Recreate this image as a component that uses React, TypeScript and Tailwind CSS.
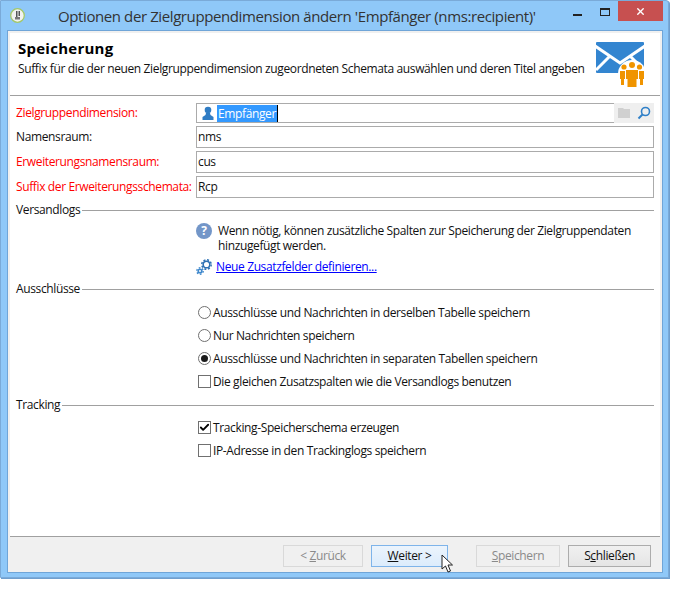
import React from 'react';
import { Check, X } from 'lucide-react';

const Field = ({ label, value, required }: { label: string; value: string; required?: boolean }) => (
  <div className="flex items-center h-[22px] mb-[3px]">
    <label className={`w-[180px] shrink-0 ${required ? 'text-[#ff0000]' : ''}`}>{label}</label>
    <div className="flex-1 h-[22px] border border-[#ababab] bg-white pl-[1px] leading-[19px]">{value}</div>
  </div>
);

const Section = ({ title }: { title: string }) => (
  <div className="flex items-center gap-[2px] h-[18px]">
    <span>{title}</span>
    <div className="flex-1 h-px bg-[#a0a0a0]" />
  </div>
);

const Radio = ({ label, checked }: { label: string; checked?: boolean }) => (
  <div className="flex items-center h-[23px] pl-[2px]">
    <span className="w-[13px] h-[13px] rounded-full border border-[#707070] bg-white flex items-center justify-center shrink-0 mr-[2px]">
      {checked && <span className="w-[7px] h-[7px] rounded-full bg-[#1a1a1a]" />}
    </span>
    <span>{label}</span>
  </div>
);

const CheckRow = ({ label, checked }: { label: string; checked?: boolean }) => (
  <div className="flex items-center h-[23px] pl-[2px]">
    <span className="w-[13px] h-[13px] border border-[#707070] bg-white flex items-center justify-center shrink-0 mr-[2px]">
      {checked && <Check className="w-[11px] h-[11px] text-black" strokeWidth={4} />}
    </span>
    <span>{label}</span>
  </div>
);

const FooterButton = ({ className, children }: { className: string; children: React.ReactNode }) => (
  <div className={`h-[22px] flex items-center justify-center border ${className}`}>{children}</div>
);

const MailIcon = () => (
  <svg width="48" height="45" viewBox="0 0 48 45" className="shrink-0">
    <rect x="0" y="0" width="48" height="31" rx="1" fill="#3385d0" />
    <path d="M-1 4l25 17L49 4M0 28l14-14M48 28L34 14" fill="none" stroke="#fff" strokeWidth="3" />
    <circle cx="36" cy="32" r="14" fill="#fff" />
    <rect x="22" y="31" width="26" height="14" fill="#fff" />
    <circle cx="28" cy="25" r="2.600" fill="#f09400" />
    <circle cx="36" cy="23" r="3" fill="#f09400" />
    <circle cx="43.500" cy="25" r="2.600" fill="#f09400" />
    <path d="M24 29h5v8h-1v6h-3v-6h-1zM43 29h5v8h-1v6h-3v-6h-1z" fill="#f09400" />
    <path d="M30 28h12v9h-1.500v8h-9v-8H30z" fill="#f09400" />
  </svg>
);

const App: React.FC = () => {
  return (
    <div className="w-[684px] h-[589px] bg-white relative overflow-hidden text-[12px] leading-[16px] text-[#111] font-['Open_Sans',sans-serif] tracking-[-0.37px]">
      <div className="w-[669px] h-[578px] bg-[#8fc8f8] border border-[#7aaad8] rounded-tr-[3px] flex flex-col shadow-[1px_1px_0_#6f9fcf]">
        {/* Title bar */}
        <div className="h-[29px] flex items-start shrink-0 relative">
          <div className="mt-[7px] ml-[9px] w-[15px] h-[15px] shrink-0">
            <svg width="15" height="15" viewBox="0 0 15 15">
              <circle cx="7.500" cy="7.500" r="6.800" fill="#f2f2f0" stroke="#a4c868" strokeWidth="1.300" />
              <path d="M6 3h1.500v6H6zM8.500 3H10v5H8.500z" fill="#555" />
              <path d="M5 9h5v2.500H5z" fill="#777" />
            </svg>
          </div>
          <div className="ml-[33px] mt-[5px] text-[15px] leading-[20px] tracking-[-0.4px] text-[#333] whitespace-nowrap">
            Optionen der Zielgruppendimension ändern 'Empfänger (nms:recipient)'
          </div>
          <div className="ml-auto flex items-start mr-[5px]">
            <div className="w-[9px] h-[2px] bg-[#222] mt-[13px] mr-[18px]" />
            <div className="w-[10px] h-[8px] border border-[#222] border-t-2 mt-[7px] mr-[8px]" />
            <div className="w-[45px] h-[20px] bg-[#c75050] flex items-center justify-center">
              <X className="w-[11px] h-[11px] text-white" strokeWidth={3} />
            </div>
          </div>
        </div>

        {/* Dialog body */}
        <div className="flex-1 ml-[6px] mr-[5px] mb-[4px] border border-[#6fa5d8] bg-[#f0f0f0] p-[2px] pb-0 flex flex-col">
          <div className="bg-white flex-1 flex flex-col">
            <div className="h-[63px] flex items-start justify-between pl-[8px] pr-[16px] border-b border-[#a0a0a0] shrink-0">
              <div>
                <h1 className="font-bold text-[15px] leading-[20px] mt-[5px] text-black tracking-[0.25px]">Speicherung</h1>
                <p className="mt-[3px] text-[#111]">
                  Suffix für die der neuen Zielgruppendimension zugeordneten Schemata auswählen und deren Titel angeben
                </p>
              </div>
              <div className="mt-[9px]">
                <MailIcon />
              </div>
            </div>

            <div className="pl-[6px] pr-[6px] pt-[7px] flex-1">
              {/* first field has the picker buttons */}
              <div className="flex items-center h-[20px] mb-[3px]">
                <label className="w-[180px] shrink-0 text-[#ff0000]">Zielgruppendimension:</label>
                <div className="flex-1 h-[20px] border border-[#ababab] border-r-0 bg-white flex items-center">
                  <svg width="14" height="14" viewBox="0 0 14 14" className="ml-[4px] mr-[2px]">
                    <circle cx="7" cy="4" r="3.300" fill="#2f7cc4" />
                    <path d="M5 7h4l.5 2 3 2v3h-11v-3l3-2z" fill="#2f7cc4" />
                  </svg>
                  <span className="bg-[#3399ff] text-white px-px leading-[17px] border-r border-black">Empfänger</span>
                  <div className="ml-auto flex h-[20px]">
                    <div className="w-[20px] bg-[#efefef] flex items-center justify-center">
                      <svg width="12" height="10" viewBox="0 0 12 10"><path d="M0 0h5l1 1h6v9H0z" fill="#d0d0d0" /></svg>
                    </div>
                    <div className="w-[20px] bg-[#efefef] flex items-center justify-center">
                      <svg width="14" height="14" viewBox="0 0 14 14" fill="none" stroke="#3080c8" strokeWidth="1.600">
                        <circle cx="8.500" cy="5.500" r="4" />
                        <path d="M5.500 8.500L1.500 12.500" strokeWidth="2" />
                      </svg>
                    </div>
                  </div>
                </div>
              </div>
              <Field label="Namensraum:" value="nms" />
              <Field label="Erweiterungsnamensraum:" value="cus" required />
              <Field label="Suffix der Erweiterungsschemata:" value="Rcp" required />

              <div className="mt-[2px]">
                <Section title="Versandlogs" />
              </div>
              <div className="pl-[180px]">
                <div className="flex items-start mt-[1px]">
                  <div className="w-[16px] h-[16px] rounded-full bg-[#7396c8] text-white font-bold text-[12px] leading-[16px] text-center shrink-0 mt-[3px] tracking-normal">
                    ?
                  </div>
                  <p className="ml-[6px] w-[430px] leading-[15px] mt-[3px]">
                    Wenn nötig, können zusätzliche Spalten zur Speicherung der Zielgruppendaten hinzugefügt werden.
                  </p>
                </div>
                <div className="flex items-center mt-[5px] h-[18px]">
                  <svg width="17" height="17" viewBox="0 0 17 17" className="shrink-0" fill="none" stroke="#2f72b4">
                    <circle cx="10.500" cy="5.500" r="3.300" strokeWidth="1.500" />
                    <circle cx="10.500" cy="5.500" r="4.700" strokeWidth="1.500" strokeDasharray="2 1.690" />
                    <circle cx="4" cy="12" r="1.800" strokeWidth="1.600" stroke="#3f88cc" />
                    <circle cx="4" cy="12" r="3.200" strokeWidth="1.400" strokeDasharray="1.700 1.650" stroke="#3f88cc" />
                  </svg>
                  <a className="ml-[3px] text-[#0000ff] underline">Neue Zusatzfelder definieren...</a>
                </div>
              </div>

              <div className="mt-[4px]">
                <Section title="Ausschlüsse" />
              </div>
              <div className="pl-[180px] mt-[3px]">
                <Radio label="Ausschlüsse und Nachrichten in derselben Tabelle speichern" />
                <Radio label="Nur Nachrichten speichern" />
                <Radio label="Ausschlüsse und Nachrichten in separaten Tabellen speichern" checked />
                <CheckRow label="Die gleichen Zusatzspalten wie die Versandlogs benutzen" />
              </div>

              <div className="mt-[3px]">
                <Section title="Tracking" />
              </div>
              <div className="pl-[180px] mt-[2px]">
                <CheckRow label="Tracking-Speicherschema erzeugen" checked />
                <CheckRow label="IP-Adresse in den Trackinglogs speichern" />
              </div>
            </div>
          </div>

          {/* Footer */}
          <div className="h-[36px] border-t border-[#a0a0a0] shrink-0 flex items-start pt-[8px] pl-[273px]">
            <FooterButton className="w-[80px] border-[#d9d9d9] text-[#8a8a8a]">
              &lt;&nbsp;<u>Z</u>urück
            </FooterButton>
            <FooterButton className="w-[77px] ml-[8px] border-[#7eb4ea] bg-gradient-to-b from-[#ecf4fc] to-[#dcecfc]">
              <u>W</u>eiter &gt;
            </FooterButton>
            <FooterButton className="w-[84px] ml-[28px] border-[#d9d9d9] text-[#8a8a8a]">
              <u>S</u>peichern
            </FooterButton>
            <FooterButton className="w-[83px] ml-[8px] border-[#acacac] bg-gradient-to-b from-[#f0f0f0] to-[#e5e5e5]">
              S<u>c</u>hließen
            </FooterButton>
          </div>
        </div>
      </div>

      {/* Mouse cursor */}
      <svg width="14" height="20" viewBox="0 0 14 20" className="absolute left-[441px] top-[554px]">
        <path d="M1 1v14l3.500-3 2.500 6 2.500-1-2.500-6h4.500z" fill="#fff" stroke="#222" strokeWidth="1" />
      </svg>
    </div>
  );
};

export default App;
